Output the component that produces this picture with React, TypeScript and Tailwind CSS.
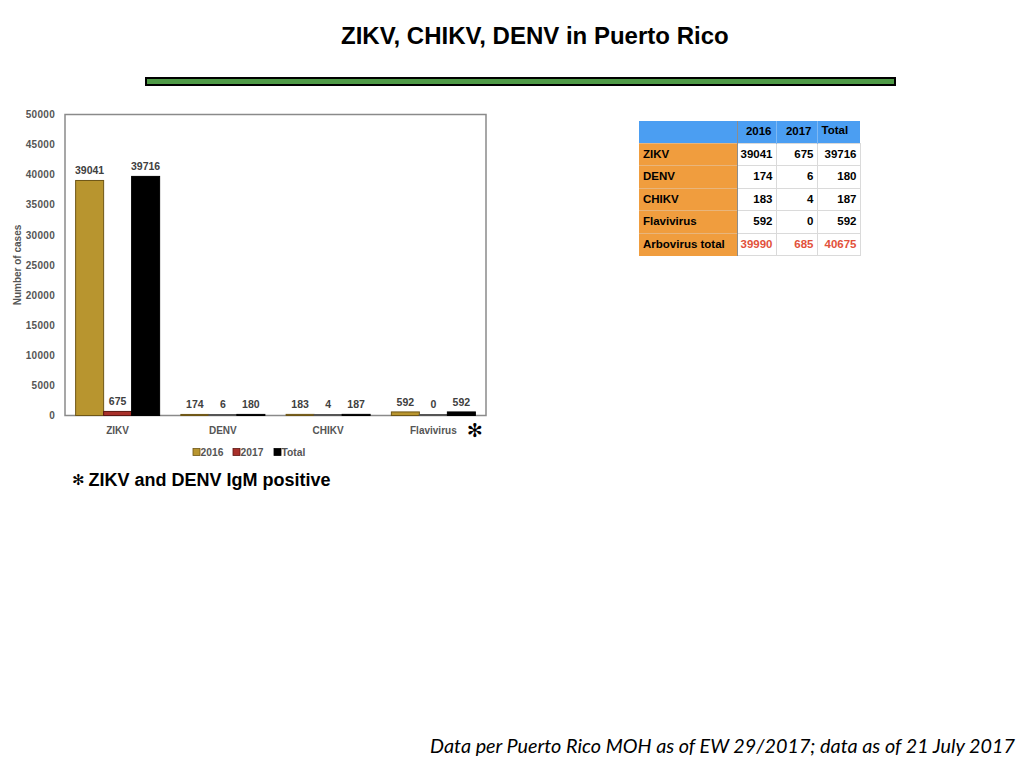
type Cat = { name: string; v2016: number; v2017: number; total: number };

const cats: Cat[] = [
  { name: "ZIKV", v2016: 39041, v2017: 675, total: 39716 },
  { name: "DENV", v2016: 174, v2017: 6, total: 180 },
  { name: "CHIKV", v2016: 183, v2017: 4, total: 187 },
  { name: "Flavivirus", v2016: 592, v2017: 0, total: 592 },
];

const rows = [
  { name: "ZIKV", a: "39041", b: "675", c: "39716" },
  { name: "DENV", a: "174", b: "6", c: "180" },
  { name: "CHIKV", a: "183", b: "4", c: "187" },
  { name: "Flavivirus", a: "592", b: "0", c: "592" },
];

// chart geometry, in svg coords (page y - 100)
const X0 = 65;
const Y0 = 14.5;
const W = 421;
const H = 301;
const BASE = Y0 + H;
const MAX = 50000;
const CW = W / 4;
const BW = 28;

const font = "'Liberation Sans', Arial, sans-serif";

function barTop(v: number) {
  return BASE - (v / MAX) * H;
}

function Chart() {
  const ticks = [0, 5000, 10000, 15000, 20000, 25000, 30000, 35000, 40000, 45000, 50000];
  const series = [
    { key: "v2016" as const, fill: "#b8952f", stroke: "#6e5616" },
    { key: "v2017" as const, fill: "#a8302a", stroke: "#5c1612" },
    { key: "total" as const, fill: "#000000", stroke: "#000000" },
  ];
  return (
    <svg width={520} height={365} className="block shrink-0" style={{ fontFamily: font }}>
      {ticks.map((t) => (
        <text
          key={t}
          x={55}
          y={barTop(t) + 3.6}
          textAnchor="end"
          fontSize={10}
          fontWeight={700}
          fill="#555"
          letterSpacing={0.3}
        >
          {t}
        </text>
      ))}
      <text
        x={0}
        y={0}
        transform="translate(21 165) rotate(-90)"
        textAnchor="middle"
        fontSize={10}
        fontWeight={700}
        fill="#555"
      >
        Number of cases
      </text>
      <rect x={X0} y={Y0} width={W} height={H} fill="none" stroke="#8a8a8a" strokeWidth={1.5} />
      {cats.map((c, i) => {
        const cx = X0 + CW * (i + 0.5);
        return (
          <g key={c.name}>
            {series.map((s, j) => {
              const v = c[s.key];
              const x = cx - 42 + j * BW;
              const top = barTop(v);
              const h = Math.max(BASE - top, 1);
              return (
                <g key={s.key}>
                  <rect
                    x={x}
                    y={BASE - h}
                    width={BW}
                    height={h}
                    fill={s.fill}
                    stroke={v > 100 ? s.stroke : "#555"}
                    strokeWidth={1}
                  />
                  <text
                    x={x + BW / 2}
                    y={Math.min(top, BASE - 1.5) - 6}
                    textAnchor="middle"
                    fontSize={10.5}
                    fontWeight={700}
                    fill="#404040"
                  >
                    {v}
                  </text>
                </g>
              );
            })}
            <text x={cx} y={333.5} textAnchor="middle" fontSize={10} fontWeight={700} fill="#555">
              {c.name}
            </text>
          </g>
        );
      })}
      <text
        x={475}
        y={337}
        textAnchor="middle"
        fontSize={19}
        fontWeight={700}
        fill="#000"
        style={{ fontFamily: "'DejaVu Sans', sans-serif" }}
      >
        ✻
      </text>
      {[
        { x: 193, label: "2016", fill: "#b8952f", stroke: "#6e5616" },
        { x: 233, label: "2017", fill: "#a8302a", stroke: "#5c1612" },
        { x: 274, label: "Total", fill: "#000", stroke: "#000" },
      ].map((l) => (
        <g key={l.label}>
          <rect x={l.x} y={348.5} width={7} height={7} fill={l.fill} stroke={l.stroke} strokeWidth={0.8} />
          <text x={l.x + 7.5} y={355.5} fontSize={10.3} fontWeight={700} fill="#555">
            {l.label}
          </text>
        </g>
      ))}
    </svg>
  );
}

function DataTable() {
  return (
    <table
      className="mt-[21px] ml-[119px] border-collapse text-[11.5px] font-bold text-black"
      style={{ fontFamily: font }}
    >
      <thead>
        <tr className="h-[22px] bg-[#4b9ef2]">
          <th className="w-[98px] border-r border-r-[#8d8d8d] p-0"></th>
          <th className="w-[39px] border-r border-r-[#7fb8f3] pr-[4px] text-right font-bold">2016</th>
          <th className="w-[41px] border-r border-r-[#7fb8f3] pr-[5px] text-right font-bold">2017</th>
          <th className="w-[43px] pb-[3px] pl-[4px] text-left font-bold">Total</th>
        </tr>
      </thead>
      <tbody>
        {rows.map((r) => (
          <tr key={r.name} className="h-[22.6px]">
            <td className="border-t border-r border-t-[#e8b57c] border-r-[#8d8d8d] bg-[#f09d3e] pl-[4px] text-left">
              {r.name}
            </td>
            <td className="border border-l-0 border-[#dadada] pr-[3px] text-right">{r.a}</td>
            <td className="border border-[#dadada] pr-[3px] text-right">{r.b}</td>
            <td className="border border-[#dadada] pr-[3px] text-right">{r.c}</td>
          </tr>
        ))}
        <tr className="h-[22.6px] text-[#e2513b]">
          <td className="border-t border-r border-t-[#e8b57c] border-r-[#8d8d8d] bg-[#f09d3e] pl-[4px] text-left text-black">
            Arbovirus total
          </td>
          <td className="border border-l-0 border-[#dadada] pr-[3px] text-right">39990</td>
          <td className="border border-[#dadada] pr-[3px] text-right">685</td>
          <td className="border border-[#dadada] pr-[3px] text-right">40675</td>
        </tr>
      </tbody>
    </table>
  );
}

export default function App() {
  return (
    <div className="flex h-[768px] w-[1024px] flex-col overflow-hidden bg-white">
      <h1
        className="pt-[24px] pl-[341px] text-[24px] leading-[24px] font-bold text-black"
        style={{ fontFamily: font }}
      >
        ZIKV, CHIKV, DENV in Puerto Rico
      </h1>
      <div className="mt-[29px] ml-[145px] h-[9px] w-[751px] border-2 border-black bg-[#4e9a46]" />
      <div className="mt-[14px] flex items-start">
        <Chart />
        <DataTable />
      </div>
      <p
        className="mt-[6px] flex items-center pl-[72px] text-[18px] leading-[18px] font-bold text-black"
        style={{ fontFamily: font }}
      >
        <span className="mr-[4px] text-[15px]" style={{ fontFamily: "'DejaVu Sans', sans-serif" }}>
          ✻
        </span>
        ZIKV and DENV IgM positive
      </p>
      <p
        className="mt-auto mb-[13px] pr-[9px] text-right text-[19.8px] leading-[20px] text-black italic"
        style={{ fontFamily: "Lato, 'Open Sans', sans-serif" }}
      >
        Data per Puerto Rico MOH as of EW 29/2017; data as of 21 July 2017
      </p>
    </div>
  );
}
